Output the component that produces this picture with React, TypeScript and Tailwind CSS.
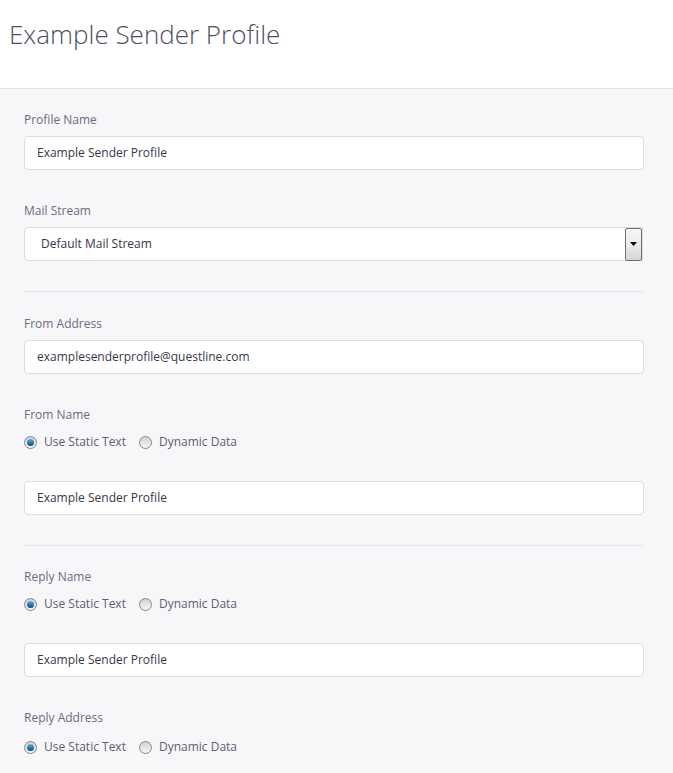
import React from "react";

const Label = ({ children }: { children: React.ReactNode }) => (
  <div className="text-[12px] leading-[18px] text-[#6c6c7c] mb-[7px]">{children}</div>
);

const TextInput = ({ value }: { value: string }) => (
  <div className="h-[34px] w-[620px] bg-white border border-[#dcdce1] rounded-[4px] flex items-center px-3 text-[12px] text-[#363848]">
    {value}
  </div>
);

const Radio = ({ checked, label }: { checked?: boolean; label: string }) => (
  <label className="flex items-center gap-[7px]">
    <span className="w-[13px] h-[13px] rounded-full border border-[#85858c] bg-gradient-to-b from-[#d2d2d2] to-[#f6f6f6] flex items-center justify-center">
      {checked && (
        <span className="w-[7px] h-[7px] rounded-full bg-gradient-to-b from-[#5ab0e0] to-[#0b4a80]" />
      )}
    </span>
    <span>{label}</span>
  </label>
);

const RadioRow = () => (
  <div className="flex items-center gap-[13px] h-[18px] text-[12px] text-[#5e6070]">
    <Radio checked label="Use Static Text" />
    <Radio label="Dynamic Data" />
  </div>
);

const App = () => {
  return (
    <div
      className="min-h-screen bg-[#f7f7f9]"
      style={{ fontFamily: '"Open Sans", "Noto Sans", sans-serif' }}
    >
      <div className="h-[89px] bg-white border-b border-[#e3e3e7] pl-[9px] pt-[16px]">
        <h1 className="text-[26px] leading-[36px] font-light text-[#4d4f5f]">Example Sender Profile</h1>
      </div>
      <div className="pl-6 pt-[22px]">
        <Label>Profile Name</Label>
        <TextInput value="Example Sender Profile" />

        <div className="mt-[32px]">
          <Label>Mail Stream</Label>
          <div className="h-[34px] w-[619px] bg-white border border-[#dcdce1] rounded-l-[4px] flex items-center text-[12px] text-[#363848]">
            <span className="flex-1 pl-4">Default Mail Stream</span>
            <span className="h-[33px] w-[17px] border border-[#6e6e6e] rounded-[2px] bg-gradient-to-b from-[#f6f6f6] via-[#ebebeb] to-[#d4d4d4] flex items-center justify-center">
              <svg width="7" height="4" viewBox="0 0 7 4">
                <path d="M0 0h7L3.5 4z" fill="#000" />
              </svg>
            </span>
          </div>
        </div>

        <div className="w-[620px] border-t border-[#e6e6ea] mt-[30px]" />

        <div className="mt-[23px]">
          <Label>From Address</Label>
          <TextInput value="examplesenderprofile@questline.com" />
        </div>

        <div className="mt-[32px]">
          <Label>From Name</Label>
          <div className="mt-[9px]">
            <RadioRow />
          </div>
          <div className="mt-[30px]">
            <TextInput value="Example Sender Profile" />
          </div>
        </div>

        <div className="w-[620px] border-t border-[#e6e6ea] mt-[30px]" />

        <div className="mt-[22px]">
          <Label>Reply Name</Label>
          <div className="mt-[9px]">
            <RadioRow />
          </div>
          <div className="mt-[30px]">
            <TextInput value="Example Sender Profile" />
          </div>
        </div>

        <div className="mt-[32px] pb-6">
          <Label>Reply Address</Label>
          <div className="mt-[11px]">
            <RadioRow />
          </div>
        </div>
      </div>
    </div>
  );
};

export default App;
